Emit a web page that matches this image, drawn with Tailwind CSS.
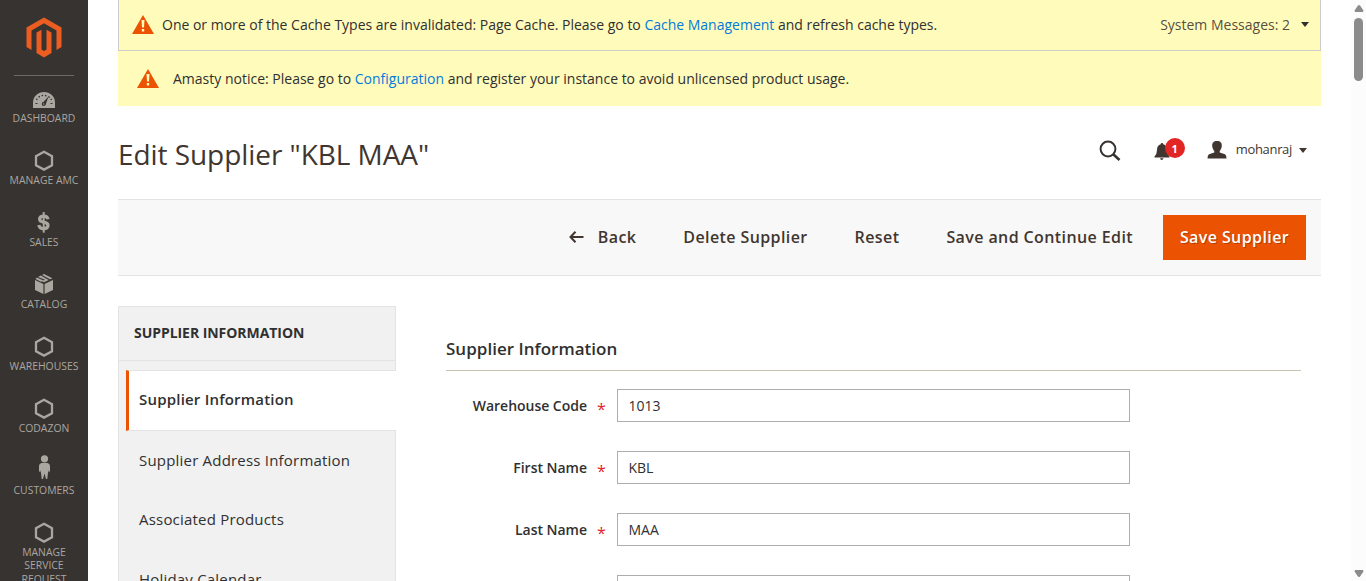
<!DOCTYPE html>
<html lang="en">
<head>
<meta charset="utf-8">
<title>Edit Supplier "KBL MAA"</title>
<script src="https://cdn.jsdelivr.net/npm/@tailwindcss/browser@4"></script>
</head>
<body class="flex h-[581px] w-[1366px] overflow-hidden bg-white font-['Open_Sans',sans-serif] text-sm leading-[19px] text-[#303030]">

<aside class="h-full w-[88px] shrink-0 overflow-hidden bg-[#373330] text-center text-[10.4px] leading-[14px] text-[#aaa6a0] uppercase">
  <div class="mx-[14px] mb-[10px] h-[76px] border-b border-[#736963] pt-[17px]">
    <svg class="mx-auto block" width="36" height="41" viewBox="0 0 36 41" fill="#eb5d20"><path d="M18 .5 35.5 10.500V30L30.500 33V13.500L18 6.200 5.500 13.500V33L.5 30V10.500zM10.500 15.500 15.500 12.700V32.500L18 34 20.500 32.500V12.700L25.500 15.500V36L18 40.500 10.500 36z"/></svg>
  </div>
  <nav class="flex flex-col gap-[23px]">
    <a class="block"><svg class="mx-auto block h-[25px] w-7" viewBox="0 0 28 25"><path d="M3 22V16.500C3 10.500 8 6 14 6s11 4.500 11 10.500V22z" fill="#aaa6a0"/><g stroke="#373330" fill="none"><path d="M5.500 17.500h2M20.500 17.500h2" stroke-width="1.200"/><path d="M6.500 14A8 7 0 0 1 21.500 14" stroke-width="1.300" stroke-dasharray="1.500 1.900"/></g><path d="M12 17.500 18.500 10.500 15.500 19z" fill="#373330"/><circle cx="13.700" cy="18" r="2" fill="#373330"/><circle cx="13.700" cy="18" r=".7" fill="#aaa6a0"/></svg>Dashboard</a>
    <a class="block"><svg class="mx-auto block h-[25px] w-7" viewBox="0 0 28 25"><path d="M14 3.700 22 8.200V17.200L14 21.600 6 17.200V8.200z" fill="none" stroke="#aaa6a0" stroke-width="2.300"/></svg>Manage AMC</a>
    <a class="block"><svg class="mx-auto block h-[25px] w-7" viewBox="0 0 28 25"><path d="M18 9.300C17.500 6.800 16 6.100 13.700 6.100 11.300 6.100 9.600 7.200 9.600 9.200 9.600 13.600 18 10.700 18 15.300 18 17.600 16.200 18.700 13.700 18.700 11 18.700 9.200 17.700 8.900 15" fill="none" stroke="#aaa6a0" stroke-width="3.200"/><path d="M13.700 2V22.700" stroke="#aaa6a0" stroke-width="2"/></svg>Sales</a>
    <a class="block"><svg class="mx-auto block h-[25px] w-7" viewBox="0 0 28 25" fill="#aaa6a0"><path d="M12 2.900 14 2 22.500 6.200 20 7.300zM10.700 3.600 18.700 8 14 10.300 12 9.300 15 7.800 8 4.900zM6.800 5.500 13.700 8.500 11 9.700 5.500 6.900zM5 8 13.400 12V22L5 18zM14.600 12 23 8V18L14.600 22z"/></svg>Catalog</a>
    <a class="block"><svg class="mx-auto block h-[25px] w-7" viewBox="0 0 28 25"><path d="M14 3.700 22 8.200V17.200L14 21.600 6 17.200V8.200z" fill="none" stroke="#aaa6a0" stroke-width="2.300"/></svg>Warehouses</a>
    <a class="block"><svg class="mx-auto block h-[25px] w-7" viewBox="0 0 28 25"><path d="M14 3.700 22 8.200V17.200L14 21.600 6 17.200V8.200z" fill="none" stroke="#aaa6a0" stroke-width="2.300"/></svg>Codazon</a>
    <a class="block"><svg class="mx-auto block h-[25px] w-7 overflow-visible" viewBox="0 0 28 25" fill="#aaa6a0"><circle cx="14.500" cy=".8" r="3.600"/><path d="M11.500 5H17.500Q20 5.300 20 8V13L18.800 14.500 18.300 12 17.300 21H16L14.500 15.500 13 21H11.700L10.700 12 10.200 14.500 9 13V8Q9 5.300 11.500 5z"/></svg>Customers</a>
    <a class="block"><svg class="mx-auto block h-[25px] w-7" viewBox="0 0 28 25"><path d="M14 3.700 22 8.200V17.200L14 21.600 6 17.200V8.200z" fill="none" stroke="#aaa6a0" stroke-width="2.300"/></svg><span class="block pt-[0.5px] leading-[13.600px]">Manage<br>Service<br>Request</span></a>
  </nav>
</aside>

<div class="h-full w-[1263px] shrink-0 overflow-hidden pr-[30px] pl-[30px]">
  <section class="flex h-[51px] items-center border border-t-0 border-[#ccc] bg-[#fffbbb] pr-[11px] pb-px pl-[13px]">
    <svg class="mr-2 shrink-0" width="22" height="19" viewBox="0 0 22 19"><path d="M11 0 22 19H0z" fill="#eb5202"/><path d="M9.500 5H12.500L12 12.500H10zM9.800 14H12.200V16.400H9.800z" fill="#fffbbb"/></svg>
    <p class="tracking-[-0.007px]">One or more of the Cache Types are invalidated: Page Cache. Please go to <a class="text-[#007bdb]">Cache Management</a> and refresh cache types.</p>
    <span class="ml-auto text-[#41362f]/90">System Messages: 2</span>
    <svg class="ml-[11px]" width="8" height="5" viewBox="0 0 8 5"><path d="M0 0H8L4 5z" fill="#303030"/></svg>
  </section>
  <section class="flex h-[55px] items-center bg-[#fffbbb] pl-[19px]">
    <svg class="mr-[14px] shrink-0" width="22" height="19" viewBox="0 0 22 19"><path d="M11 0 22 19H0z" fill="#eb5202"/><path d="M9.500 5H12.500L12 12.500H10zM9.800 14H12.200V16.400H9.800z" fill="#fffbbb"/></svg>
    <p>Amasty notice: Please go to <a class="text-[#007bdb]">Configuration</a> and register your instance to avoid unlicensed product usage.</p>
  </section>

  <header class="flex h-[93px] items-start pr-[14px]">
    <h1 class="mt-[29px] text-[28px] leading-[38px] tracking-[-0.06px] text-[#41362f]">Edit Supplier "KBL MAA"</h1>
    <div class="mt-[34px] ml-auto flex h-5 items-center text-[13px] text-[#41362f]">
      <svg width="22" height="21" viewBox="0 0 22 21" fill="none" stroke="#373330"><circle cx="9" cy="9" r="7.400" stroke-width="2"/><path d="M14 14 20.500 20" stroke-width="2.600"/></svg>
      <div class="relative ml-[33px] h-5 w-8">
        <svg class="mt-[3px]" width="16" height="17" viewBox="0 0 16 17" fill="#41362f"><path d="M8 0Q9.300 0 9.300 1.300 13 2.200 13 7 13 11 15.500 13.500V14.500H.5V13.500Q3 11 3 7 3 2.200 6.700 1.300 6.700 0 8 0zM6 15.300H9.500Q9.200 17 7.700 17 6.300 17 6 15.300z"/></svg>
        <span class="absolute -top-[2px] left-[11px] flex size-5 items-center justify-center rounded-full bg-[#e22626] text-[11px] font-bold text-white">1</span>
      </div>
      <svg class="ml-[21px]" width="20" height="18" viewBox="0 0 20 18" fill="#41362f"><path d="M10 0C13.500 0 15 2 14.800 5 14.600 7.500 13.500 9 12.700 10V11.500L18 13.200Q19.500 14 19.500 17.500H.5Q.5 14 2 13.200L7.300 11.500V10C6.500 9 5.400 7.500 5.200 5 5 2 6.500 0 10 0z"/></svg>
      <span class="ml-[9px] pb-0.5 tracking-[-0.32px]">mohanraj</span>
      <svg class="ml-[7px]" width="8" height="5" viewBox="0 0 8 5"><path d="M0 0H8L4 5z" fill="#41362f"/></svg>
    </div>
  </header>

  <div class="flex h-[77px] items-center justify-end border-y border-[#e3e3e3] bg-[#f8f8f8] pr-[15px] text-base font-semibold tracking-[0.4px] text-[#41362f]">
    <svg class="mr-[14px] mb-px" width="15" height="12" viewBox="0 0 15 12" fill="none" stroke="#41362f" stroke-width="2"><path d="M14.500 6H1.500M6.500 .8 1.500 6 6.500 11.200"/></svg>
    <span class="mr-[47px] pb-0.5">Back</span>
    <span class="mr-[47px] pb-0.5">Delete Supplier</span>
    <span class="mr-[47px] pb-0.5">Reset</span>
    <span class="mr-[30px] pb-0.5">Save and Continue Edit</span>
    <button class="h-[45px] w-[143px] bg-[#eb5202] pb-px text-white [text-shadow:1px_1px_0_rgba(0,0,0,.25)]">Save Supplier</button>
  </div>

  <main class="flex">
    <nav class="mt-[30px] h-[300px] w-[278px] shrink-0 border border-[#e3e3e3] bg-[#f1f1f1]">
      <h2 class="h-[54px] border-b border-[#e3e3e3] pt-4 pl-[15px] font-bold tracking-[-0.05px]">SUPPLIER INFORMATION</h2>
      <div class="mt-[9px] text-[15px] tracking-[0.2px]">
        <a class="-mr-px ml-[7px] block h-[61px] border-y border-l-3 border-y-[#e3e3e3] border-l-[#eb5202] bg-white pt-[19px] pl-[10px] font-semibold">Supplier Information</a>
        <a class="block h-[59px] pt-5 pl-5">Supplier Address Information</a>
        <a class="block h-[59px] pt-5 pl-5">Associated Products</a>
        <a class="block h-[59px] pt-[21px] pl-5">Holiday Calendar</a>
      </div>
    </nav>
    <form class="mt-[60px] mr-5 ml-[50px] grow">
      <h2 class="mb-[18px] h-[35px] border-b border-[#cac3b4] pt-[3px] text-[17px] font-semibold tracking-[0.02px]">Supplier Information</h2>
      <div class="flex flex-col gap-[29px]">
        <div class="flex h-[33px] items-center"><label class="w-[141px] text-right font-semibold tracking-[-0.02px]">Warehouse Code</label><span class="w-[30px] pt-1.5 pl-[10px] text-base text-[#e22626]">*</span><div class="h-[33px] w-[513px] border border-[#adadad] px-[10.500px] py-1.5">1013</div></div>
        <div class="flex h-[33px] items-center"><label class="w-[141px] text-right font-semibold tracking-[-0.02px]">First Name</label><span class="w-[30px] pt-1.5 pl-[10px] text-base text-[#e22626]">*</span><div class="h-[33px] w-[513px] border border-[#adadad] px-[10.500px] py-1.5">KBL</div></div>
        <div class="flex h-[33px] items-center"><label class="w-[141px] text-right font-semibold tracking-[-0.02px]">Last Name</label><span class="w-[30px] pt-1.5 pl-[10px] text-base text-[#e22626]">*</span><div class="h-[33px] w-[513px] border border-[#adadad] px-[10.500px] py-1.5">MAA</div></div>
        <div class="ml-[171px] h-[33px] w-[513px] border border-[#adadad]"></div>
      </div>
    </form>
  </main>
</div>

<div class="flex h-full w-[15px] shrink-0 flex-col items-center bg-[#fcfcfc] pt-[5px] pb-[4px]">
  <svg width="10" height="7" viewBox="0 0 10 7"><path d="M4 .5Q5-.5 6 .5L9.500 5.500 9 7H1L.5 5.500z" fill="#8b8b8b"/></svg>
  <div class="mt-1.5 h-[63px] w-[9px] rounded-full bg-[#8b8b8b]"></div>
  <svg class="mt-auto" width="10" height="7" viewBox="0 0 10 7"><path d="M4 6.500Q5 7.500 6 6.500L9.500 1.500 9 0H1L.5 1.500z" fill="#8b8b8b"/></svg>
</div>
</body>
</html>
